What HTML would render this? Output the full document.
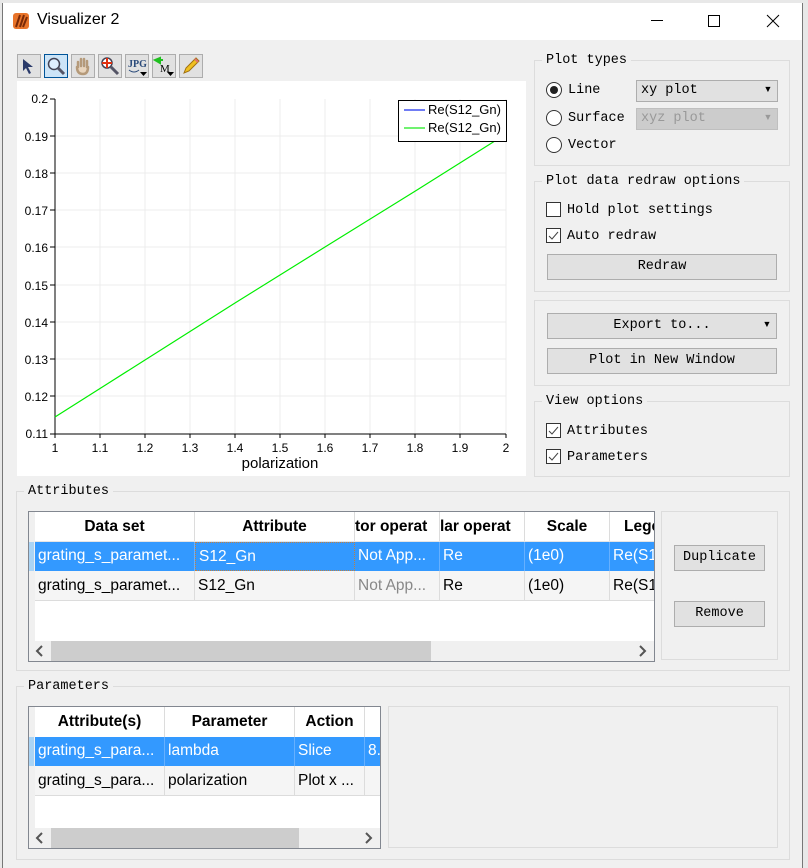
<!DOCTYPE html>
<html><head><meta charset="utf-8"><style>
*{box-sizing:border-box;margin:0;padding:0}
body{width:808px;height:868px;overflow:hidden;background:#e8e8e8;position:relative;font-family:"Liberation Sans","Noto Sans CJK SC",sans-serif}
.a{position:absolute}
.mono{font-family:"Liberation Mono","Noto Sans CJK SC",monospace;font-size:13.5px;color:#000}
.grp{position:absolute;border:1px solid #dcdcdc}
.gt{position:absolute;background:#f0f0f0;padding:0 4px;font-family:"Liberation Mono",monospace;font-size:13.5px;line-height:14px}
.btn{position:absolute;background:#e1e1e1;border:1px solid #adadad;font-family:"Liberation Mono",monospace;font-size:13.5px;text-align:center}
.tb{position:absolute;top:54px;width:24px;height:24px;background:#e1e1e1;border:1px solid #adadad}
.cb{position:absolute;width:15px;height:15px;border:1px solid #333;background:#fff}
.rd{position:absolute;width:16px;height:16px;border:1px solid #333;border-radius:50%;background:#fff}
.tbl{position:absolute;border:1px solid #828790;background:#fff;overflow:hidden}
.c{position:absolute;height:100%;font-size:15.5px;white-space:nowrap;overflow:hidden;border-right:1px solid #dcdcdc;padding-left:3px}
.row{position:absolute;left:6px;right:0}
.hd .c{font-weight:bold;text-align:center;padding:0;line-height:29px}
.chev{position:absolute;font-size:18px;color:#555;font-family:"DejaVu Sans",sans-serif;line-height:18px}
</style></head><body>
<div class="a" style="left:2px;top:3px;width:801px;height:865px;background:#f0f0f0;border-left:1px solid #777;border-right:1px solid #777"></div>
<div class="a" style="left:3px;top:3px;width:799px;height:37px;background:#fff"></div>
<svg class="a" style="left:12px;top:12px" width="18" height="18"><rect x="1" y="1" width="16" height="16" rx="3" fill="#e8742a"/><path d="M4 15 L8 3 M8 15 L12 3 M11 15 L15 5" stroke="#7a2a08" stroke-width="2"/></svg>
<div class="a" style="left:37px;top:11px;font-size:16px;color:#000">Visualizer 2</div>
<div class="a" style="left:651px;top:20px;width:12px;height:1px;background:#000"></div>
<div class="a" style="left:708px;top:15px;width:12px;height:12px;border:1px solid #000"></div>
<svg class="a" style="left:766px;top:14px" width="14" height="14"><path d="M1 1L13 13M13 1L1 13" stroke="#000" stroke-width="1"/></svg>

<!-- toolbar -->
<div class="tb" style="left:17px"><svg width="22" height="22"><path d="M5 4 L5 16 L8 13 L11 19 L13 18 L10 12 L15 12 Z" fill="#2a3a6a"/></svg></div>
<div class="tb" style="left:44px;background:#cce4f7;border-color:#005499"><svg width="22" height="22"><circle cx="9" cy="9" r="5.5" fill="#dfefff" stroke="#445" stroke-width="1.5"/><path d="M13 13 L19 19" stroke="#556" stroke-width="3"/></svg></div>
<div class="tb" style="left:71px"><svg width="22" height="22"><path d="M6 12 L6 7 M9 11 L9 4 M12 11 L12 4 M15 12 L15 6 M5 12 Q5 19 11 19 Q16 19 16 12" stroke="#b59a7a" stroke-width="2.5" fill="#e9d5bd" stroke-linecap="round"/></svg></div>
<div class="tb" style="left:98px"><svg width="22" height="22"><circle cx="8" cy="8" r="5" fill="#fff" stroke="#445" stroke-width="1.5"/><path d="M8 3V13M3 8H13" stroke="#e03010" stroke-width="2"/><path d="M12 12 L19 19" stroke="#556" stroke-width="3"/></svg></div>
<div class="tb" style="left:125px"><svg width="22" height="22"><text x="2" y="12" font-size="10" font-weight="bold" fill="#2a4a7a" font-family="Liberation Serif">JPG</text><path d="M3 15 Q8 19 13 15" stroke="#2a4a7a" fill="none"/><path d="M14 17 H21 L17.5 21Z" fill="#000"/></svg></div>
<div class="tb" style="left:152px"><svg width="22" height="22"><path d="M2 5 L7 3 L7 8Z M4 5 H10" fill="#20c020" stroke="#20c020" stroke-width="2"/><text x="7" y="17" font-size="11" font-family="Liberation Serif">M</text><path d="M14 17 H21 L17.5 21Z" fill="#000"/></svg></div>
<div class="tb" style="left:179px"><svg width="22" height="22"><path d="M4 18 L6 13 L16 3 L19 6 L9 16 Z" fill="#f0c020" stroke="#a07010"/><path d="M15 4 L18 7" stroke="#e07070" stroke-width="2"/></svg></div>

<!-- plot -->
<svg class="a" style="left:17px;top:81px" width="509" height="395">
<rect width="509" height="395" fill="#fff"/>
<g stroke="#ececec" stroke-width="1">
<path d="M83 18V353M128 18V353M173 18V353M218 18V353M263 18V353M308 18V353M353 18V353M398 18V353M443 18V353M489 18V353"/>
<path d="M38 55H489M38 92H489M38 129H489M38 166H489M38 204H489M38 241H489M38 278H489M38 315H489"/>
</g>
<path d="M38 18V353H489" stroke="#000" fill="none"/>
<g stroke="#000"><path d="M33 18H38M33 55H38M33 92H38M33 129H38M33 166H38M33 204H38M33 241H38M33 278H38M33 315H38M33 353H38"/>
<path d="M38 353v4M83 353v4M128 353v4M173 353v4M218 353v4M263 353v4M308 353v4M353 353v4M398 353v4M443 353v4M489 353v4"/></g>
<g font-size="12" font-family="Liberation Sans" fill="#000" text-anchor="end">
<text x="31" y="22">0.2</text><text x="31" y="60">0.19</text><text x="31" y="97">0.18</text><text x="31" y="134">0.17</text><text x="31" y="171">0.16</text><text x="31" y="209">0.15</text><text x="31" y="246">0.14</text><text x="31" y="283">0.13</text><text x="31" y="320">0.12</text><text x="31" y="357">0.11</text></g>
<g font-size="12" font-family="Liberation Sans" fill="#000" text-anchor="middle">
<text x="38" y="371">1</text><text x="83" y="371">1.1</text><text x="128" y="371">1.2</text><text x="173" y="371">1.3</text><text x="218" y="371">1.4</text><text x="263" y="371">1.5</text><text x="308" y="371">1.6</text><text x="353" y="371">1.7</text><text x="398" y="371">1.8</text><text x="443" y="371">1.9</text><text x="489" y="371">2</text></g>
<text x="263" y="387" font-size="15" font-family="Liberation Sans" text-anchor="middle">polarization</text>
<path d="M38 336 L128 279 L218 222 L308 166 L400 109 L489 53" stroke="#00ee00" fill="none" stroke-width="1.2"/>
<rect x="381.5" y="19.5" width="108" height="41" fill="#fff" stroke="#000"/>
<path d="M387 29H408" stroke="#4050f0" stroke-width="1.5"/><path d="M387 47H408" stroke="#40ee40" stroke-width="1.5"/>
<text x="411" y="33" font-size="13" font-family="Liberation Sans">Re(S12_Gn)</text>
<text x="411" y="51" font-size="13" font-family="Liberation Sans">Re(S12_Gn)</text>
</svg>

<!-- Plot types -->
<div class="grp" style="left:534px;top:60px;width:256px;height:106px"></div>
<div class="gt" style="left:542px;top:54px">Plot types</div>
<div class="rd" style="left:546px;top:82px"><div style="margin:3px;width:8px;height:8px;border-radius:50%;background:#222"></div></div>
<div class="a mono" style="left:568px;top:83px">Line</div>
<div class="btn" style="left:636px;top:80px;width:142px;height:22px;text-align:left;padding:2px 4px">xy plot<span style="position:absolute;right:5px;top:0">▾</span></div>
<div class="rd" style="left:546px;top:110px"></div>
<div class="a mono" style="left:568px;top:111px">Surface</div>
<div class="btn" style="left:636px;top:108px;width:142px;height:22px;text-align:left;padding:2px 4px;color:#999;background:#ccc;border-color:#bfbfbf">xyz plot<span style="position:absolute;right:5px;top:0">▾</span></div>
<div class="rd" style="left:546px;top:137px"></div>
<div class="a mono" style="left:568px;top:138px">Vector</div>

<!-- redraw -->
<div class="grp" style="left:534px;top:181px;width:256px;height:111px"></div>
<div class="gt" style="left:542px;top:175px">Plot data redraw options</div>
<div class="cb" style="left:546px;top:202px"></div>
<div class="a mono" style="left:567px;top:203px">Hold plot settings</div>
<div class="cb" style="left:546px;top:228px"><svg width="13" height="13" style="display:block"><path d="M2 7 L5 10 L11 3" stroke="#444" fill="none"/></svg></div>
<div class="a mono" style="left:567px;top:229px">Auto redraw</div>
<div class="btn" style="left:547px;top:254px;width:230px;height:26px;line-height:24px">Redraw</div>

<!-- export -->
<div class="grp" style="left:534px;top:300px;width:256px;height:86px"></div>
<div class="btn" style="left:547px;top:313px;width:230px;height:26px;line-height:24px">Export to...<span style="position:absolute;right:5px;top:0">▾</span></div>
<div class="btn" style="left:547px;top:348px;width:230px;height:26px;line-height:24px">Plot in New Window</div>

<!-- view -->
<div class="grp" style="left:534px;top:401px;width:256px;height:76px"></div>
<div class="gt" style="left:542px;top:395px">View options</div>
<div class="cb" style="left:546px;top:423px"><svg width="13" height="13" style="display:block"><path d="M2 7 L5 10 L11 3" stroke="#444" fill="none"/></svg></div>
<div class="a mono" style="left:567px;top:424px">Attributes</div>
<div class="cb" style="left:546px;top:449px"><svg width="13" height="13" style="display:block"><path d="M2 7 L5 10 L11 3" stroke="#444" fill="none"/></svg></div>
<div class="a mono" style="left:567px;top:450px">Parameters</div>

<!-- Attributes -->
<div class="grp" style="left:16px;top:491px;width:774px;height:180px"></div>
<div class="gt" style="left:24px;top:485px">Attributes</div>
<div class="tbl" style="left:28px;top:511px;width:627px;height:151px">
 <div class="a" style="left:0;top:0;width:6px;height:130px;background:#f0f0f0"></div>
 <div class="a" style="left:0;top:30px;width:5px;height:29px;background:#aad4f5"></div>
 <div class="row hd" style="top:0;height:30px;border-bottom:1px solid #e5e5e5">
  <div class="c" style="left:0;width:160px">Data set</div><div class="c" style="left:160px;width:160px">Attribute</div><div class="c" style="left:320px;width:85px;text-align:left">tor operat</div><div class="c" style="left:405px;width:85px;text-align:left">lar operat</div><div class="c" style="left:490px;width:85px">Scale</div><div class="c" style="left:575px;width:60px;text-align:left;padding-left:14px">Lege</div>
 </div>
 <div class="row" style="top:30px;height:29px;background:#3399ff;color:#fff;line-height:28px">
  <div class="c" style="left:0;width:160px;border-color:#66b0ff">grating_s_paramet...</div><div class="c" style="left:160px;width:160px;border:1px dotted #c08040">S12_Gn</div><div class="c" style="left:320px;width:85px;border-color:#66b0ff">Not App...</div><div class="c" style="left:405px;width:85px;border-color:#66b0ff">Re</div><div class="c" style="left:490px;width:85px;border-color:#66b0ff">(1e0)</div><div class="c" style="left:575px;width:60px">Re(S1</div>
 </div>
 <div class="row" style="top:59px;height:30px;background:#f5f5f5;line-height:29px;border-bottom:1px solid #dcdcdc">
  <div class="c" style="left:0;width:160px">grating_s_paramet...</div><div class="c" style="left:160px;width:160px">S12_Gn</div><div class="c" style="left:320px;width:85px;color:#888">Not App...</div><div class="c" style="left:405px;width:85px">Re</div><div class="c" style="left:490px;width:85px">(1e0)</div><div class="c" style="left:575px;width:60px">Re(S1</div>
 </div>
 <div class="a" style="left:0;top:129px;width:627px;height:20px;background:#f0f0f0"></div>
 <div class="a" style="left:22px;top:129px;width:380px;height:20px;background:#cdcdcd"></div>
 <svg class="a" style="left:6px;top:133px" width="10" height="12"><path d="M7 1 L2 6 L7 11" stroke="#555" stroke-width="2" fill="none"/></svg>
 <svg class="a" style="left:609px;top:133px" width="10" height="12"><path d="M2 1 L7 6 L2 11" stroke="#555" stroke-width="2" fill="none"/></svg>
</div>
<div class="grp" style="left:661px;top:511px;width:117px;height:149px"></div>
<div class="btn" style="left:674px;top:545px;width:91px;height:26px;line-height:24px">Duplicate</div>
<div class="btn" style="left:674px;top:601px;width:91px;height:26px;line-height:24px">Remove</div>

<!-- Parameters -->
<div class="grp" style="left:16px;top:686px;width:774px;height:174px"></div>
<div class="gt" style="left:24px;top:680px">Parameters</div>
<div class="tbl" style="left:28px;top:706px;width:353px;height:143px">
 <div class="a" style="left:0;top:0;width:6px;height:122px;background:#f0f0f0"></div>
 <div class="a" style="left:0;top:30px;width:5px;height:29px;background:#aad4f5"></div>
 <div class="row hd" style="top:0;height:30px">
  <div class="c" style="left:0;width:130px">Attribute(s)</div><div class="c" style="left:130px;width:130px">Parameter</div><div class="c" style="left:260px;width:70px">Action</div><div class="c" style="left:330px;width:20px"></div>
 </div>
 <div class="row" style="top:30px;height:29px;background:#3399ff;color:#fff;line-height:28px">
  <div class="c" style="left:0;width:130px;border-color:#66b0ff">grating_s_para...</div><div class="c" style="left:130px;width:130px;border-color:#66b0ff">lambda</div><div class="c" style="left:260px;width:70px;border-color:#66b0ff">Slice</div><div class="c" style="left:330px;width:20px">8.</div>
 </div>
 <div class="row" style="top:59px;height:30px;background:#f5f5f5;line-height:29px;border-bottom:1px solid #dcdcdc">
  <div class="c" style="left:0;width:130px">grating_s_para...</div><div class="c" style="left:130px;width:130px">polarization</div><div class="c" style="left:260px;width:70px">Plot x ...</div><div class="c" style="left:330px;width:20px"></div>
 </div>
 <div class="a" style="left:0;top:121px;width:353px;height:20px;background:#f0f0f0"></div>
 <div class="a" style="left:22px;top:121px;width:248px;height:20px;background:#cdcdcd"></div>
 <svg class="a" style="left:6px;top:125px" width="10" height="12"><path d="M7 1 L2 6 L7 11" stroke="#555" stroke-width="2" fill="none"/></svg>
 <svg class="a" style="left:335px;top:125px" width="10" height="12"><path d="M2 1 L7 6 L2 11" stroke="#555" stroke-width="2" fill="none"/></svg>
</div>
<div class="grp" style="left:388px;top:706px;width:390px;height:142px"></div>
</body></html>
